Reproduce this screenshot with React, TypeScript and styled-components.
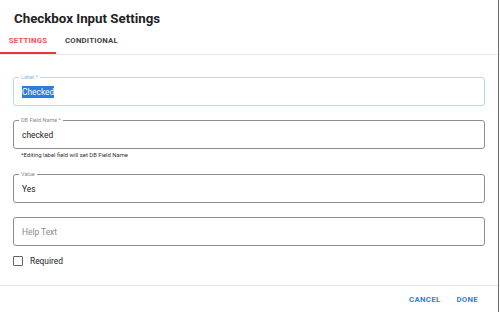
import React from "react";
import styled, { createGlobalStyle } from "styled-components";

const Global = createGlobalStyle`
  html, body { margin: 0; padding: 0; background: #fff; }
  body { font-family: Roboto, "Liberation Sans", sans-serif; }
`;

const Dialog = styled.div`
  width: 499px;
  height: 312px;
  box-sizing: border-box;
  border-right: 1px solid #6e6e6e;
  background: #fff;
  display: flex;
  flex-direction: column;
`;

const Title = styled.h1`
  margin: 0;
  padding: 10px 0 0 14px;
  height: 30px;
  box-sizing: border-box;
  font-size: 13.3px;
  font-weight: 700;
  color: #222;
  line-height: 17px;
`;

const TabBar = styled.div`
  display: flex;
  height: 24px;
  border-bottom: 1px solid #e8e8e8;
`;

const Tab = styled.div<{ $active?: boolean }>`
  width: ${(p) => (p.$active ? "56px" : "auto")};
  padding: ${(p) => (p.$active ? "0" : "0 0 0 9px")};
  display: flex;
  align-items: center;
  justify-content: center;
  font-size: 7.8px;
  font-weight: 700;
  letter-spacing: 0.2px;
  color: ${(p) => (p.$active ? "#ef5350" : "#444")};
  border-bottom: 2px solid ${(p) => (p.$active ? "#e53935" : "transparent")};
  padding-bottom: 2px;
`;

const Content = styled.div`
  flex: 1;
  padding: 22px 13px 0 13px;
  display: flex;
  flex-direction: column;
`;

const Field = styled.div<{ $focused?: boolean; $gap?: number }>`
  position: relative;
  height: 29px;
  box-sizing: border-box;
  border: 1px solid ${(p) => (p.$focused ? "#b3d7f7" : "#8d8d8d")};
  border-radius: 3px;
  display: flex;
  align-items: center;
  padding-left: 8px;
  margin-top: ${(p) => p.$gap ?? 0}px;
  font-size: 8.4px;
  color: #222;
`;

const Legend = styled.span<{ $focused?: boolean }>`
  position: absolute;
  top: -4px;
  left: 5px;
  padding: 0 2px;
  background: #fff;
  font-size: 5.5px;
  line-height: 7px;
  color: ${(p) => (p.$focused ? "#90b8de" : "#8a8a8a")};
`;

const Selected = styled.span`
  background: #2b7de0;
  color: #fff;
  padding: 1px 0;
`;

const Placeholder = styled.span`
  color: #8a8a8a;
`;

const Helper = styled.div`
  font-size: 5.9px;
  color: #333;
  padding: 3px 0 0 8px;
  height: 10px;
`;

const CheckRow = styled.label`
  display: flex;
  align-items: center;
  gap: 7px;
  margin-top: 10px;
  font-size: 8.4px;
  color: #222;
`;

const Box = styled.span`
  width: 8px;
  height: 8px;
  border: 1px solid #666;
  border-radius: 1px;
`;

const Footer = styled.div`
  height: 26px;
  border-top: 1px solid #e6e6e6;
  display: flex;
  justify-content: flex-end;
  align-items: center;
  gap: 16px;
  padding-right: 20px;
`;

const Button = styled.button`
  border: none;
  background: none;
  padding: 0;
  font-family: inherit;
  font-size: 7.8px;
  font-weight: 700;
  letter-spacing: 0.3px;
  color: #2f7fd6;
`;

export default function App() {
  return (
    <>
      <Global />
      <Dialog>
        <Title>Checkbox Input Settings</Title>
        <TabBar>
          <Tab $active>SETTINGS</Tab>
          <Tab>CONDITIONAL</Tab>
        </TabBar>
        <Content>
          <Field $focused>
            <Legend $focused>Label *</Legend>
            <Selected>Checked</Selected>
          </Field>
          <Field $gap={14}>
            <Legend>DB Field Name *</Legend>
            checked
          </Field>
          <Helper>*Editing label field will set DB Field Name</Helper>
          <Field $gap={12}>
            <Legend>Value</Legend>
            Yes
          </Field>
          <Field $gap={14}>
            <Placeholder>Help Text</Placeholder>
          </Field>
          <CheckRow>
            <Box />
            Required
          </CheckRow>
        </Content>
        <Footer>
          <Button>CANCEL</Button>
          <Button>DONE</Button>
        </Footer>
      </Dialog>
    </>
  );
}
